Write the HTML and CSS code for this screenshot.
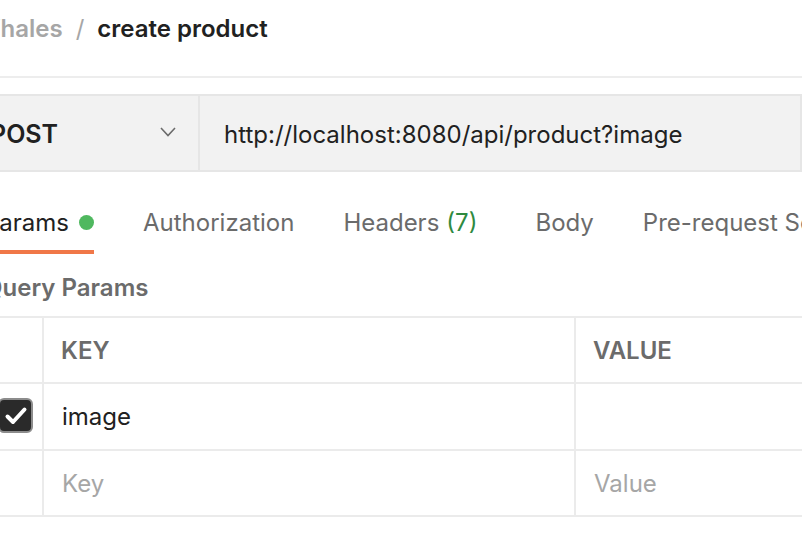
FILE: index.html
```html
<!DOCTYPE html>
<html>
<head>
<meta charset="utf-8">
<link rel="stylesheet" href="styles.css">
</head>
<body>
<div class="page">
  <div class="crumbs">
    <span class="crumb-parent">Whales</span>
    <span class="crumb-sep">/</span>
    <span class="crumb-current">create product</span>
  </div>

  <div class="request-bar">
    <div class="method">
      <span class="method-name">POST</span>
      <svg class="chevron" width="16" height="10" viewBox="0 0 16 10"><path d="M1 1 L8 8.5 L15 1" fill="none" stroke="#6b6b6b" stroke-width="1.6"/></svg>
    </div>
    <div class="url">http://localhost:8080/api/product?image</div>
  </div>

  <div class="tabs">
    <div class="tab active">Params <span class="dot"></span></div>
    <div class="tab">Authorization</div>
    <div class="tab tab-headers">Headers <span class="count">(7)</span></div>
    <div class="tab">Body</div>
    <div class="tab">Pre-request Script</div>
  </div>

  <div class="section-title">Query Params</div>

  <div class="table">
    <div class="row head-row">
      <div class="cell check"></div>
      <div class="cell head">KEY</div>
      <div class="cell head">VALUE</div>
    </div>
    <div class="row">
      <div class="cell check">
        <span class="checkbox">
          <svg width="24" height="20" viewBox="0 0 24 20"><path d="M3.5 10.5 L9 16 L20.5 3.5" fill="none" stroke="#fff" stroke-width="4" stroke-linecap="round" stroke-linejoin="round"/></svg>
        </span>
      </div>
      <div class="cell">image</div>
      <div class="cell"></div>
    </div>
    <div class="row last-row">
      <div class="cell check"></div>
      <div class="cell placeholder">Key</div>
      <div class="cell placeholder">Value</div>
    </div>
  </div>
</div>
</body>
</html>
```

FILE: styles.css
```css
html, body {
  margin: 0;
  padding: 0;
  background: #ffffff;
  overflow: hidden;
}

body {
  font-family: Inter, "Noto Sans", sans-serif;
  font-size: 24px;
  line-height: 29px;
  color: #212121;
  width: 802px;
  height: 554px;
}

.page {
  margin-left: -16px;
  width: 818px;
}

.crumbs {
  height: 78px;
  box-sizing: border-box;
  padding-top: 14px;
  margin-left: -8px;
  border-bottom: 2px solid #ededed;
  font-weight: 600;
  white-space: nowrap;
  display: flex;
  gap: 13px;
}

.crumb-parent {
  color: #a6a6a6;
}

.crumb-sep {
  color: #a6a6a6;
  font-weight: 400;
}

.crumb-current {
  color: #212121;
}

.request-bar {
  margin-top: 16px;
  height: 78px;
  box-sizing: border-box;
  border: 2px solid #e6e6e6;
  background: #f2f2f2;
  display: flex;
  width: 818px;
}

.method {
  width: 214px;
  box-sizing: border-box;
  padding-left: 4px;
  padding-right: 22px;
  display: flex;
  align-items: center;
  justify-content: space-between;
  border-right: 2px solid #e6e6e6;
}

.method-name {
  font-weight: 600;
  font-size: 25px;
  color: #212121;
  margin-top: 2px;
}

.chevron {
  display: block;
  margin-top: -2px;
}

.url {
  padding-left: 24px;
  display: flex;
  align-items: center;
  color: #212121;
  white-space: nowrap;
  padding-top: 2px;
}

.tabs {
  display: flex;
  gap: 49px;
  padding-top: 36px;
  white-space: nowrap;
}

.tab {
  color: #6b6b6b;
  padding-bottom: 13px;
  border-bottom: 4px solid transparent;
  display: flex;
  align-items: center;
}

.tab.active {
  color: #212121;
  border-bottom-color: #f07748;
}

.tab-headers {
  margin-right: 9px;
}

.dot {
  display: inline-block;
  width: 15px;
  height: 15px;
  border-radius: 50%;
  background: #4fb85f;
  margin-left: 10px;
}

.count {
  color: #2f8a3f;
  margin-left: 7px;
}

.section-title {
  margin-top: 19px;
  font-weight: 600;
  color: #6b6b6b;
}

.table {
  margin-top: 14px;
  border-bottom: 2px solid #ebebeb;
}

.row {
  display: grid;
  grid-template-columns: 58px 532px 1fr;
  border-top: 2px solid #ebebeb;
  height: 65px;
}

.head-row,
.last-row {
  height: 64px;
}

.cell {
  display: flex;
  align-items: center;
  padding-left: 18px;
  border-left: 2px solid #ebebeb;
}

.cell.check {
  border-left: none;
  padding-left: 0;
  justify-content: flex-end;
  padding-right: 9px;
}

.head {
  font-weight: 600;
  color: #6b6b6b;
  padding-left: 17px;
}

.placeholder {
  color: #a6a6a6;
}

.checkbox {
  width: 35px;
  height: 35px;
  box-sizing: border-box;
  border: 2px solid #8c8c8c;
  background: #2a2a2a;
  border-radius: 6px;
  display: flex;
  align-items: center;
  justify-content: center;
  margin-top: -2px;
}

.checkbox svg {
  display: block;
}
```
